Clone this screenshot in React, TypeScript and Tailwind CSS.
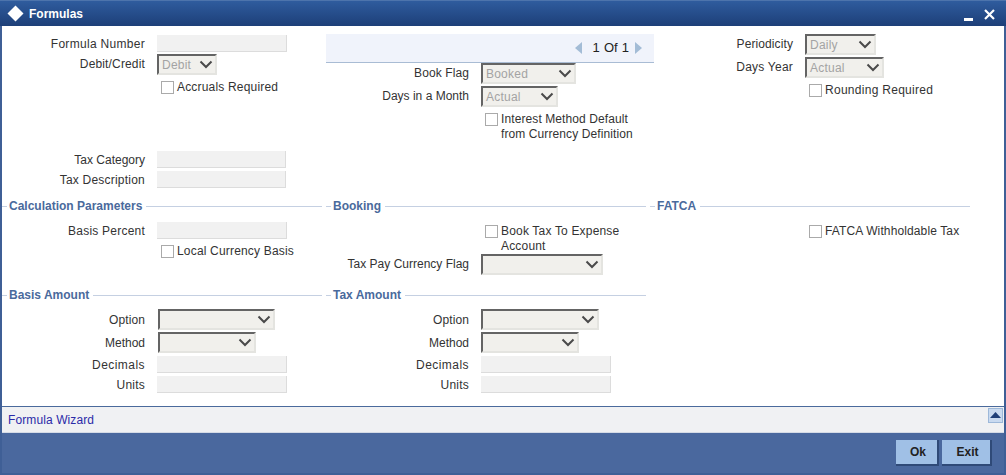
import React from 'react';

const inputBox = "h-[17px] bg-[#f1f1f1] border-b border-r border-[#dcdcdc]";

function Label({ text, w = "w-[143px]", tk = "tracking-[0.22px]" }: { text: string; w?: string; tk?: string }) {
    return <span className={`${w} ${tk} shrink-0 text-right text-[12px] leading-[14px] text-[#333333] whitespace-nowrap`}>{text}</span>;
}

function Input({ w = "w-[130px]" }: { w?: string }) {
    return <div className={`${w} ${inputBox}`} />;
}

function Select({ value, w }: { value?: string; w: string }) {
    return (
        <div className={`${w} h-[21px] flex items-center justify-between bg-[#f1f0ec] border-t-2 border-l-2 border-t-[#646464] border-l-[#646464] border-b-2 border-r-2 border-b-[#e4e4e0] border-r-[#e4e4e0] pl-[3px] pr-[2px]`}>
            <span className="text-[12px] tracking-[0.22px] text-[#a3a3a3] leading-none">{value}</span>
            <svg width="14" height="9" viewBox="0 0 14 9" fill="none" className="shrink-0">
                <path d="M1.5 1.5 L7 7 L12.5 1.5" stroke="#4a4a4a" strokeWidth="2" />
            </svg>
        </div>
    );
}

function FieldRow({ label, className, labelW, tk, children }: { label: string; className?: string; labelW?: string; tk?: string; children: React.ReactNode }) {
    return (
        <div className={`flex items-center gap-[12px] ${className ?? ''}`}>
            <Label text={label} w={labelW} tk={tk} />
            {children}
        </div>
    );
}

function Check({ label, className, lines, tk = "tracking-[0.18px]" }: { label?: string; lines?: string[]; className?: string; tk?: string }) {
    return (
        <div className={`flex items-start gap-[3px] ${className ?? ''}`}>
            <div className="w-[13px] h-[13px] shrink-0 bg-white border border-[#aaaaaa]" />
            <div className={`${tk} text-[12px] leading-[15px] text-[#333333] whitespace-nowrap -mt-[1px]`}>
                {lines ? lines.map(l => <div key={l}>{l}</div>) : label}
            </div>
        </div>
    );
}

function Legend({ title, className }: { title: string; className?: string }) {
    return (
        <div className={`flex items-center h-[14px] w-[320px] ${className ?? ''}`}>
            <div className="w-[5px] h-px bg-[#c5d0e2]" />
            <span className="px-[2px] text-[12px] font-bold text-[#4a6a9c] whitespace-nowrap leading-none">{title}</span>
            <div className="flex-1 h-px bg-[#c5d0e2] ml-[2px]" />
        </div>
    );
}

export default function App() {
    return (
        <div className="w-[1006px] h-[475px] flex flex-col overflow-hidden bg-[#3f5f96] px-[2px] pb-[2px]" style={{ fontFamily: "'Liberation Sans', Arial, sans-serif" }}>
            {/* title bar */}
            <div className="h-[26px] -mx-[2px] shrink-0 flex items-center justify-between bg-gradient-to-b from-[#2f5c9e] to-[#1d3f78] border-t border-[#4d74ac] pl-[7px] pr-[11px]">
                <div className="flex items-center gap-[5px]">
                    <svg width="17" height="17" viewBox="0 0 17 17"><path d="M8.5 0.5 L16.5 8.5 L8.5 16.5 L0.5 8.5 Z" fill="#ffffff" /></svg>
                    <span className="text-[12px] font-bold text-white">Formulas</span>
                </div>
                <div className="flex items-end gap-[11px] h-[14px]">
                    <div className="w-[9px] h-[3px] bg-white" />
                    <svg width="11" height="11" viewBox="0 0 11 11" className="mb-[1px]"><path d="M1 1 L10 10 M10 1 L1 10" stroke="#ffffff" strokeWidth="2.2" /></svg>
                </div>
            </div>

            {/* form body */}
            <div className="flex-1 bg-white">
                {/* top block */}
                <div className="flex h-[165px]">
                    <div className="w-[324px] pt-[9px]">
                        <FieldRow label="Formula Number" tk="tracking-[0.3px]"><Input /></FieldRow>
                        <FieldRow label="Debit/Credit" tk="tracking-[0.15px] -mt-[2px]" className="mt-[2px]"><Select value="Debit" w="w-[60px]" /></FieldRow>
                        <Check label="Accruals Required" className="mt-[6px] ml-[159px]" />
                        <FieldRow label="Tax Category" tk="tracking-normal" className="mt-[56px]"><Input w="w-[129px]" /></FieldRow>
                        <FieldRow label="Tax Description" className="mt-[3px]"><Input w="w-[129px]" /></FieldRow>
                    </div>
                    <div className="w-[328px] pt-[8px]">
                        <div className="h-[29px] flex items-center justify-end bg-[#f0f3fb] border-b border-[#a9bcd4] pr-[12px] text-[#222222]">
                            <svg width="7" height="12" viewBox="0 0 7 12"><path d="M7 0 V12 L0 6 Z" fill="#a3bcd6" /></svg>
                            <span className="ml-[11px] mr-[6px] text-[13px] [word-spacing:0.5px]">1 Of 1</span>
                            <svg width="7" height="12" viewBox="0 0 7 12"><path d="M0 0 V12 L7 6 Z" fill="#a3bcd6" /></svg>
                        </div>
                        <FieldRow label="Book Flag" tk="tracking-[0.1px] -mt-[2px]"><Select value="Booked" w="w-[95px]" /></FieldRow>
                        <FieldRow label="Days in a Month" tk="tracking-normal -mt-[2px]" className="mt-[2px]"><Select value="Actual" w="w-[77px]" /></FieldRow>
                        <Check lines={["Interest Method Default", "from Currency Definition"]} tk="tracking-[0.1px]" className="mt-[6px] ml-[159px]" />
                    </div>
                    <div className="flex-1 pt-[8px]">
                        <FieldRow label="Periodicity" tk="tracking-[0.1px] -mt-[2px]" labelW="w-[139px]"><Select value="Daily" w="w-[71px]" /></FieldRow>
                        <FieldRow label="Days Year" tk="tracking-[0.22px] -mt-[2px]" labelW="w-[139px]" className="mt-[2px]"><Select value="Actual" w="w-[79px]" /></FieldRow>
                        <Check label="Rounding Required" tk="tracking-[0.28px]" className="mt-[6px] ml-[155px]" />
                    </div>
                </div>

                {/* calculation / booking / fatca */}
                <div className="flex h-[97px] pt-[8px]">
                    <div className="w-[324px]">
                        <Legend title="Calculation Parameters" />
                        <FieldRow label="Basis Percent" className="mt-[9px]"><Input /></FieldRow>
                        <Check label="Local Currency Basis" className="mt-[6px] ml-[159px]" />
                    </div>
                    <div className="w-[328px]">
                        <Legend title="Booking" />
                        <Check lines={["Book Tax To Expense", "Account"]} className="mt-[12px] ml-[159px]" />
                        <FieldRow label="Tax Pay Currency Flag" tk="tracking-normal -mt-[2px]"><Select w="w-[122px]" /></FieldRow>
                    </div>
                    <div className="flex-1">
                        <Legend title="FATCA" className="-ml-[4px]" />
                        <Check label="FATCA Withholdable Tax" tk="tracking-[0.12px]" className="mt-[12px] ml-[155px]" />
                    </div>
                </div>

                {/* basis amount / tax amount */}
                <div className="flex">
                    <div className="w-[324px]">
                        <Legend title="Basis Amount" />
                        <FieldRow label="Option" tk="tracking-[0.1px]" className="mt-[7px]"><Select w="ml-[1px] w-[117px]" /></FieldRow>
                        <FieldRow label="Method" tk="tracking-normal" className="mt-[2px]"><Select w="ml-[1px] w-[98px]" /></FieldRow>
                        <FieldRow label="Decimals" tk="tracking-[0.45px]" className="mt-[3px]"><Input /></FieldRow>
                        <FieldRow label="Units" className="mt-[3px]"><Input /></FieldRow>
                    </div>
                    <div className="w-[328px]">
                        <Legend title="Tax Amount" />
                        <FieldRow label="Option" tk="tracking-[0.1px]" className="mt-[7px]"><Select w="w-[118px]" /></FieldRow>
                        <FieldRow label="Method" tk="tracking-normal" className="mt-[2px]"><Select w="w-[98px]" /></FieldRow>
                        <FieldRow label="Decimals" tk="tracking-[0.45px]" className="mt-[3px]"><Input /></FieldRow>
                        <FieldRow label="Units" className="mt-[3px]"><Input /></FieldRow>
                    </div>
                </div>
            </div>

            {/* wizard strip */}
            <div className="h-[27px] shrink-0 flex items-center justify-between bg-[#f0f1f3] border-t border-t-[#4a6a9c] border-b border-b-[#d5dbe6] pl-[6px] pr-[1px]">
                <span className="text-[12px] tracking-[0.1px] text-[#2b2ba8]">Formula Wizard</span>
                <div className="w-[15px] h-[15px] mb-[9px] flex items-center justify-center bg-[#c9daf0] border border-[#9db8d9]">
                    <svg width="11" height="6" viewBox="0 0 11 6"><path d="M5.5 0 L11 6 H0 Z" fill="#1f3f78" /></svg>
                </div>
            </div>

            {/* footer */}
            <div className="h-[40px] shrink-0 flex items-start justify-end gap-[3px] bg-[#4a689e] pt-[7px] pr-[12px]">
                <div className="w-[43px] h-[26px] flex items-center justify-center bg-[#a0c0e6] border-b-2 border-r-2 border-[#2f4a78] pl-[3px] text-[12px] font-bold text-[#222222]">Ok</div>
                <div className="w-[50px] h-[26px] flex items-center justify-center bg-[#a0c0e6] border-b-2 border-r-2 border-[#2f4a78] pl-[3px] text-[12px] font-bold text-[#222222]">Exit</div>
            </div>
        </div>
    );
}
